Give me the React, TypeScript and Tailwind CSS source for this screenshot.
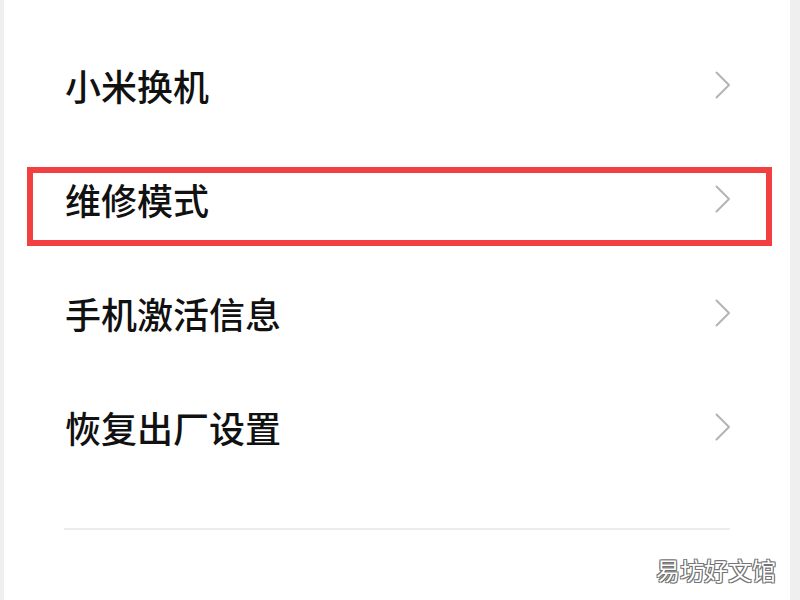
const items = ['小米换机', '维修模式', '手机激活信息', '恢复出厂设置'];

function Chevron() {
  return (
    <svg width="18" height="28" viewBox="0 0 18 28" fill="none" className="shrink-0">
      <path d="M2.5 1.5 L15 14 L2.5 26.5" stroke="#b4b4b4" strokeWidth="2" strokeLinecap="round" strokeLinejoin="round" />
    </svg>
  );
}

export default function App() {
  return (
    <div className="w-[800px] h-[600px] bg-[#efefef] flex overflow-hidden" style={{ fontFamily: '"Noto Sans CJK SC", "Noto Sans", sans-serif' }}>
      <div className="relative ml-[4px] w-[786px] h-full bg-white flex flex-col pt-[28px]">
        {items.map((label) => (
          <div key={label} className="h-[114px] flex items-center justify-between pl-[61px] pr-[58px]">
            <span className="text-[36px] font-medium text-[#111] leading-none">{label}</span>
            <Chevron />
          </div>
        ))}
        <div className="mt-[44px] mx-[60px] h-[2px] bg-[#ececec]" />
        <div className="flex-1 flex items-end justify-end pr-[14px] pb-[18px]">
          <span className="text-[24px] leading-none text-white [text-shadow:0_0_1px_#555,1px_1px_0_#777,-1px_-1px_0_#777,1px_-1px_0_#777,-1px_1px_0_#777]">易坊好文馆</span>
        </div>
        {/* highlight frame */}
        <div className="absolute left-[23px] top-[167px] w-[745px] h-[79px] border-[6px] border-[#f1403f]" />
      </div>
    </div>
  );
}
